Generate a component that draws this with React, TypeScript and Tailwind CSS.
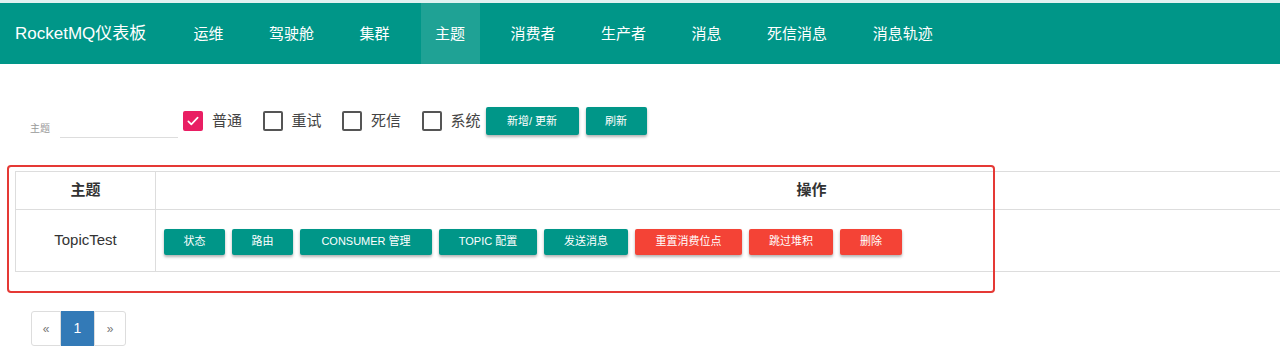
import { useState } from 'react';

const navItems = ['运维', '驾驶舱', '集群', '主题', '消费者', '生产者', '消息', '死信消息', '消息轨迹'];

const actions = [
  { label: '状态', w: 'w-[61px]', red: false },
  { label: '路由', w: 'w-[61px]', red: false },
  { label: 'CONSUMER 管理', w: 'w-[132px]', red: false },
  { label: 'TOPIC 配置', w: 'w-[98px]', red: false },
  { label: '发送消息', w: 'w-[84px]', red: false },
  { label: '重置消费位点', w: 'w-[107px]', red: true },
  { label: '跳过堆积', w: 'w-[84px]', red: true },
  { label: '删除', w: 'w-[62px]', red: true },
];

function Check({ label, checked, onToggle }: { label: string; checked: boolean; onToggle: () => void }) {
  return (
    <label className="flex items-center cursor-pointer" onClick={onToggle}>
      <span
        className={
          'w-[20px] h-[20px] rounded-[2px] flex items-center justify-center ' +
          (checked ? 'bg-[#e91e63] border-2 border-[#e91e63]' : 'border-2 border-[#555]')
        }
      >
        {checked && (
          <svg className="w-[16px] h-[16px]" viewBox="0 0 24 24" fill="none" stroke="white" strokeWidth={2.5}>
            <path d="M5 12.5l4.5 4.5L19 7" strokeLinecap="round" strokeLinejoin="round" />
          </svg>
        )}
      </span>
      <span className="ml-[9px] text-[15px] text-[#444]">{label}</span>
    </label>
  );
}

export default function App() {
  const [types, setTypes] = useState({ normal: true, retry: false, dlq: false, system: false });
  const toggle = (k: keyof typeof types) => setTypes({ ...types, [k]: !types[k] });

  return (
    <div className="w-[1280px] h-[356px] overflow-hidden bg-white font-['Liberation_Sans','Noto_Sans_CJK_SC',sans-serif]">
      <div className="h-[3px] bg-[#e0f2f1]" />
      <nav className="h-[61px] bg-[#009688] flex items-stretch text-white">
        <div className="pl-[15px] w-[179px] flex items-center text-[17px]">RocketMQ仪表板</div>
        <ul className="flex items-stretch text-[15px] gap-[16.5px]">
          {navItems.map((item) => (
            <li
              key={item}
              className={'px-[14.5px] pt-[1px] flex items-center ' + (item === '主题' ? 'bg-[#1fa295]' : '')}
            >
              {item}
            </li>
          ))}
        </ul>
      </nav>

      <div className="relative px-[15px]">
        <div className="flex items-center pt-[54px] pl-[15px]">
          <div className="flex items-end">
            <span className="text-[10px] text-[#999] mb-[2px]">主题</span>
            <div className="ml-[10px] w-[118px] border-b border-[#ddd] h-[20px]" />
          </div>
          <div className="flex items-center ml-[5px] gap-[20.5px] -mt-[14px]">
            <Check label="普通" checked={types.normal} onToggle={() => toggle('normal')} />
            <Check label="重试" checked={types.retry} onToggle={() => toggle('retry')} />
            <Check label="死信" checked={types.dlq} onToggle={() => toggle('dlq')} />
            <Check label="系统" checked={types.system} onToggle={() => toggle('system')} />
          </div>
          <div className="flex gap-[7px] ml-[5px] -mt-[14px]">
            <button className="w-[93px] h-[28px] bg-[#009688] text-white text-[11px] rounded-[2px] shadow-[0_2px_3px_rgba(0,0,0,0.3)]">
              新增/ 更新
            </button>
            <button className="w-[61px] h-[28px] bg-[#009688] text-white text-[11px] rounded-[2px] shadow-[0_2px_3px_rgba(0,0,0,0.3)]">
              刷新
            </button>
          </div>
        </div>

        <table className="mt-[33px] w-[1452px] border-collapse text-[#333]">
          <thead>
            <tr className="h-[38px] border-t border-b border-[#ddd]">
              <th className="w-[140px] border-l border-r border-[#ddd] text-[15px] font-bold">主题</th>
              <th className="text-[15px] font-bold">操作</th>
            </tr>
          </thead>
          <tbody>
            <tr className="h-[62px] border-b border-[#ddd]">
              <td className="border-l border-r border-[#ddd] text-center text-[15px]">TopicTest</td>
              <td className="pl-[8px]">
                <div className="flex gap-[7px] pt-[2px]">
                  {actions.map((a) => (
                    <button
                      key={a.label}
                      className={
                        a.w +
                        ' h-[26px] text-white text-[11px] rounded-[2px] shadow-[0_2px_3px_rgba(0,0,0,0.3)] ' +
                        (a.red ? 'bg-[#f44336]' : 'bg-[#009688]')
                      }
                    >
                      {a.label}
                    </button>
                  ))}
                </div>
              </td>
            </tr>
          </tbody>
        </table>

        <div className="absolute left-[7px] top-[101px] w-[988px] h-[128px] border-2 border-[#e53935] rounded-[4px] pointer-events-none" />

        <ul className="flex mt-[39px] ml-[16px] text-[12px]">
          <li className="w-[30px] h-[35px] flex items-center justify-center border border-[#ddd] text-[#777] rounded-l-[3px]">«</li>
          <li className="w-[33px] h-[35px] flex items-center justify-center bg-[#337ab7] border border-[#337ab7] text-white text-[14px]">1</li>
          <li className="w-[32px] h-[35px] flex items-center justify-center border border-[#ddd] text-[#777] rounded-r-[3px]">»</li>
        </ul>
      </div>
    </div>
  );
}
